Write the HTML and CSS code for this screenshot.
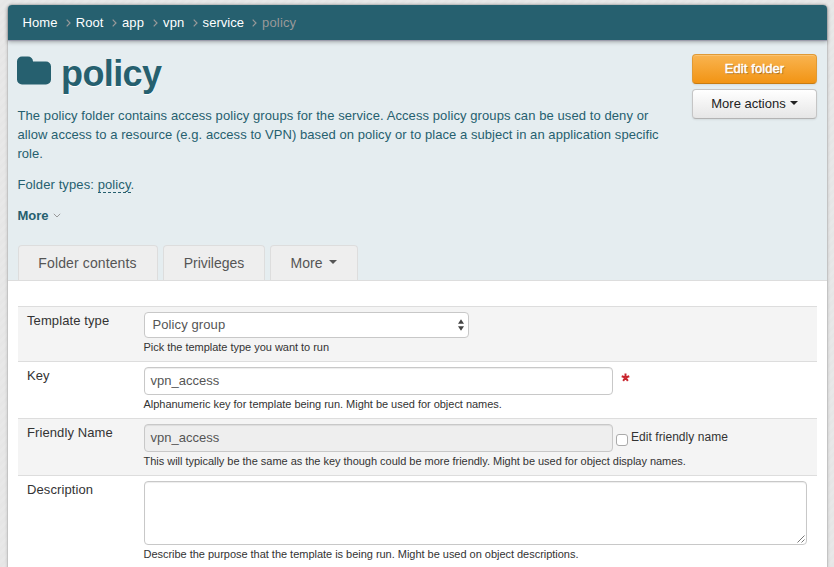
FILE: index.html
```html
<!DOCTYPE html>
<html lang="en">
<head>
<meta charset="utf-8">
<title>policy</title>
<link rel="stylesheet" href="styles.css">
</head>
<body>
<div class="page">
  <nav class="crumbs">
    <a class="c-home">Home<svg class="sep" viewBox="0 0 5 8"><path d="M.7.7 4 4 .7 7.300"/></svg></a>
    <a class="c-root">Root<svg class="sep" viewBox="0 0 5 8"><path d="M.7.7 4 4 .7 7.300"/></svg></a>
    <a class="c-app">app<svg class="sep" viewBox="0 0 5 8"><path d="M.7.7 4 4 .7 7.300"/></svg></a>
    <a class="c-vpn">vpn<svg class="sep" viewBox="0 0 5 8"><path d="M.7.7 4 4 .7 7.300"/></svg></a>
    <a class="c-service">service<svg class="sep" viewBox="0 0 5 8"><path d="M.7.7 4 4 .7 7.300"/></svg></a>
    <span class="current">policy</span>
  </nav>
  <header class="head">
    <div class="top">
      <div class="intro">
        <h1><svg class="folder" viewBox="0 0 34 29"><path d="M0 5.500A5 5 0 0 1 5 .5h6A5 5 0 0 1 16 5.500H29a5 5 0 0 1 5 5V23.500a5 5 0 0 1-5 5H5a5 5 0 0 1-5-5Z"/></svg><span>policy</span></h1>
        <p><span class="l1">The policy folder contains access policy groups for the service. Access policy groups can be used to deny or</span><br><span class="l2">allow access to a resource (e.g. access to VPN) based on policy or to place a subject in an application specific</span><br>role.</p>
        <p class="types">Folder types: <span class="term">policy</span>.</p>
        <p class="more"><b>More</b><svg viewBox="0 0 8 5"><path d="M.8.8 4 4 7.200.8"/></svg></p>
      </div>
      <div class="actions">
        <button class="btn primary">Edit folder</button>
        <button class="btn">More actions<i class="caret"></i></button>
      </div>
    </div>
    <div class="tabs">
      <a class="tab t1">Folder contents</a>
      <a class="tab t2">Privileges</a>
      <a class="tab t3">More<i class="caret"></i></a>
    </div>
  </header>
  <form class="form">
    <div class="row r1">
      <label>Template type</label>
      <div class="field">
        <div class="control select"><span>Policy group</span><svg viewBox="0 0 6 12"><path d="M0 4.800 3 .3 6 4.800ZM0 7.200 3 11.700 6 7.200Z"/></svg></div>
        <small>Pick the template type you want to run</small>
      </div>
    </div>
    <div class="row r2">
      <label>Key</label>
      <div class="field">
        <div class="line"><div class="control text">vpn_access</div><svg class="req" viewBox="0 0 10 10"><path d="M5 5V.5M5 5 .8 3.600M5 5 9.200 3.600M5 5 2.400 8.700M5 5 7.600 8.700"/></svg></div>
        <small>Alphanumeric key for template being run. Might be used for object names.</small>
      </div>
    </div>
    <div class="row r3">
      <label>Friendly Name</label>
      <div class="field">
        <div class="line"><div class="control text disabled">vpn_access</div><span class="check"></span><span class="check-label">Edit friendly name</span></div>
        <small>This will typically be the same as the key though could be more friendly. Might be used for object display names.</small>
      </div>
    </div>
    <div class="row r4">
      <label>Description</label>
      <div class="field">
        <div class="control area"><svg viewBox="0 0 8 8"><path d="M.5 7.500 7.500.5M4.500 7.500 7.500 4.500"/></svg></div>
        <small>Describe the purpose that the template is being run. Might be used on object descriptions.</small>
      </div>
    </div>
  </form>
</div>
</body>
</html>
```
FILE: styles.css
```css
* { box-sizing: border-box; }
html { height: 100%; overflow: hidden; }
body {
  margin: 0;
  height: 567px;
  overflow: hidden;
  padding: 4px 6px 0 7px;
  background: repeating-linear-gradient(135deg, #e8e8e8 0 3px, #e6e6e6 3px 6px);
  font: 13px/19px "Liberation Sans", Arial, sans-serif;
  color: #333;
}
svg { flex: none; }
.page {
  height: 580px;
  background: #fff;
  border: 1px solid #c4c4c4;
  border-radius: 5px;
  box-shadow: 0 0 3px rgba(0, 0, 0, .15);
}
.crumbs {
  position: relative;
  display: flex;
  align-items: center;
  height: 35px;
  padding: 0 0 0 14.600px;
  background: #26606f;
  color: #fff;
  border-radius: 4px 4px 0 0;
  box-shadow: 0 1px 1px #99a, 0 2px 4px rgba(0, 0, 0, .3);
}
.crumbs a {
  display: flex;
  align-items: center;
  justify-content: space-between;
  padding-right: 5px;
  white-space: nowrap;
  letter-spacing: .05px;
}
.c-home { width: 53.200px; }
.c-root { width: 46.300px; }
.c-app { width: 41px; }
.c-vpn { width: 39.500px; }
.c-service { width: 59.500px; }
.sep { width: 5px; height: 8px; fill: none; stroke: #999; stroke-width: 1.2; }
.current { color: #999; letter-spacing: .15px; }
.head {
  height: 241px;
  display: flex;
  flex-direction: column;
  justify-content: space-between;
  padding: 0 10px 0 9px;
  background: #e5edf0;
  border-bottom: 1px solid #ddd;
  color: #26606f;
}
.top { display: flex; justify-content: space-between; }
.intro { width: 660px; padding-left: .5px; }
h1 {
  display: flex;
  margin: 14px 0 12px;
  height: 40px;
  font-size: 36px;
  line-height: 40px;
  letter-spacing: -.6px;
  text-shadow: 0 1px 0 #fff;
}
h1 span { margin-left: 10px; }
.folder { width: 34px; height: 29px; margin-top: 2px; margin-left: -.5px; fill: #26606f; }
p { margin: 0 0 12px; white-space: nowrap; }
.l1 { letter-spacing: .088px; }
.l2 { letter-spacing: .06px; }
.types { letter-spacing: .1px; }
.term { border-bottom: 1px dashed #26606f; }
.more { display: flex; align-items: center; margin: 0; }
.more svg { width: 8px; height: 5px; margin-left: 4px; fill: none; stroke: #999; }
.actions { display: flex; flex-direction: column; gap: 5px; width: 125px; padding-top: 14px; }
.btn {
  display: flex;
  align-items: center;
  justify-content: center;
  height: 30px;
  padding: 0 0 2px;
  font: 13px/19px "Liberation Sans", Arial, sans-serif;
  color: #222;
  border: 1px solid #c5c5c5;
  border-bottom-color: #b3b3b3;
  border-radius: 4px;
  background: linear-gradient(#fff, #e6e6e6);
  box-shadow: inset 0 1px 0 rgba(255, 255, 255, .2), 0 1px 2px rgba(0, 0, 0, .08);
}
.primary {
  color: #fff;
  background: linear-gradient(#f9b450, #f29414);
  border-color: #e09a35;
  border-bottom-color: #c87c12;
  text-shadow: 1px 1px 1px rgba(0, 0, 0, .4);
  letter-spacing: .1px;
  -webkit-text-stroke: .5px #fff;
}
.caret {
  border: 4px solid transparent;
  border-top-color: currentColor;
  border-bottom: 0;
  margin-left: 4px;
}
.tabs { display: flex; gap: 5px; padding-left: 1px; }
.tab {
  display: flex;
  justify-content: center;
  align-items: center;
  height: 35px;
  padding-top: 1px;
  background: #eee;
  color: #555;
  border: 1px solid #ddd;
  border-bottom: 0;
  border-radius: 4px 4px 0 0;
  font-size: 14px;
}
.t1 { width: 140px; padding-right: 1px; letter-spacing: .12px; }
.t2 { width: 102px; }
.t3 { width: 88px; }
.t3 .caret { margin: 0 0 3px 7px; }
.form { margin: 25px 10px 0; }
.row { display: flex; padding: 5px 10px 0 9px; border-top: 1px solid #ddd; background: #fff; }
.row label { width: 117px; flex: none; margin-top: -1px; letter-spacing: .1px; }
.r1, .r3 { background: #f4f4f4; }
.r1 { height: 55px; }
.r2, .r3 { height: 57px; }
.r4 { height: 100px; }
.field { flex: 1; min-width: 0; }
.line { display: flex; }
.control { background: #fff; border: 1px solid #c8c8c8; border-radius: 4px; color: #555; }
.select {
  display: flex;
  align-items: center;
  justify-content: space-between;
  width: 325px;
  height: 26px;
  padding: 0 4px 0 7.500px;
  letter-spacing: .1px;
}
.select span { margin-bottom: 2px; }
.select svg { width: 6px; height: 12px; fill: #444; }
.text { width: 469px; height: 28px; padding: 3px 5.500px; box-shadow: inset 0 1px 1px rgba(0, 0, 0, .075); }
.disabled { background: #eee; }
.req { width: 9px; height: 9px; margin: 6px 0 0 8px; fill: none; stroke: #c9252d; stroke-width: 2.2; }
.check { width: 12px; height: 12px; margin: 10px 3px 0; background: #fff; border: 1px solid #aaa; border-radius: 3px; }
.check-label { font-size: 12px; margin-top: 4px; white-space: nowrap; letter-spacing: .05px; }
.area {
  display: flex;
  justify-content: flex-end;
  align-items: flex-end;
  width: 663px;
  height: 64px;
  padding: 0 1px 1px 0;
  box-shadow: inset 0 1px 1px rgba(0, 0, 0, .075);
}
.area svg { width: 8px; height: 8px; fill: none; stroke: #555; stroke-width: .8; }
small { display: block; margin-left: -.5px; font-size: 11px; line-height: 19px; letter-spacing: -.025px; white-space: nowrap; }
```
